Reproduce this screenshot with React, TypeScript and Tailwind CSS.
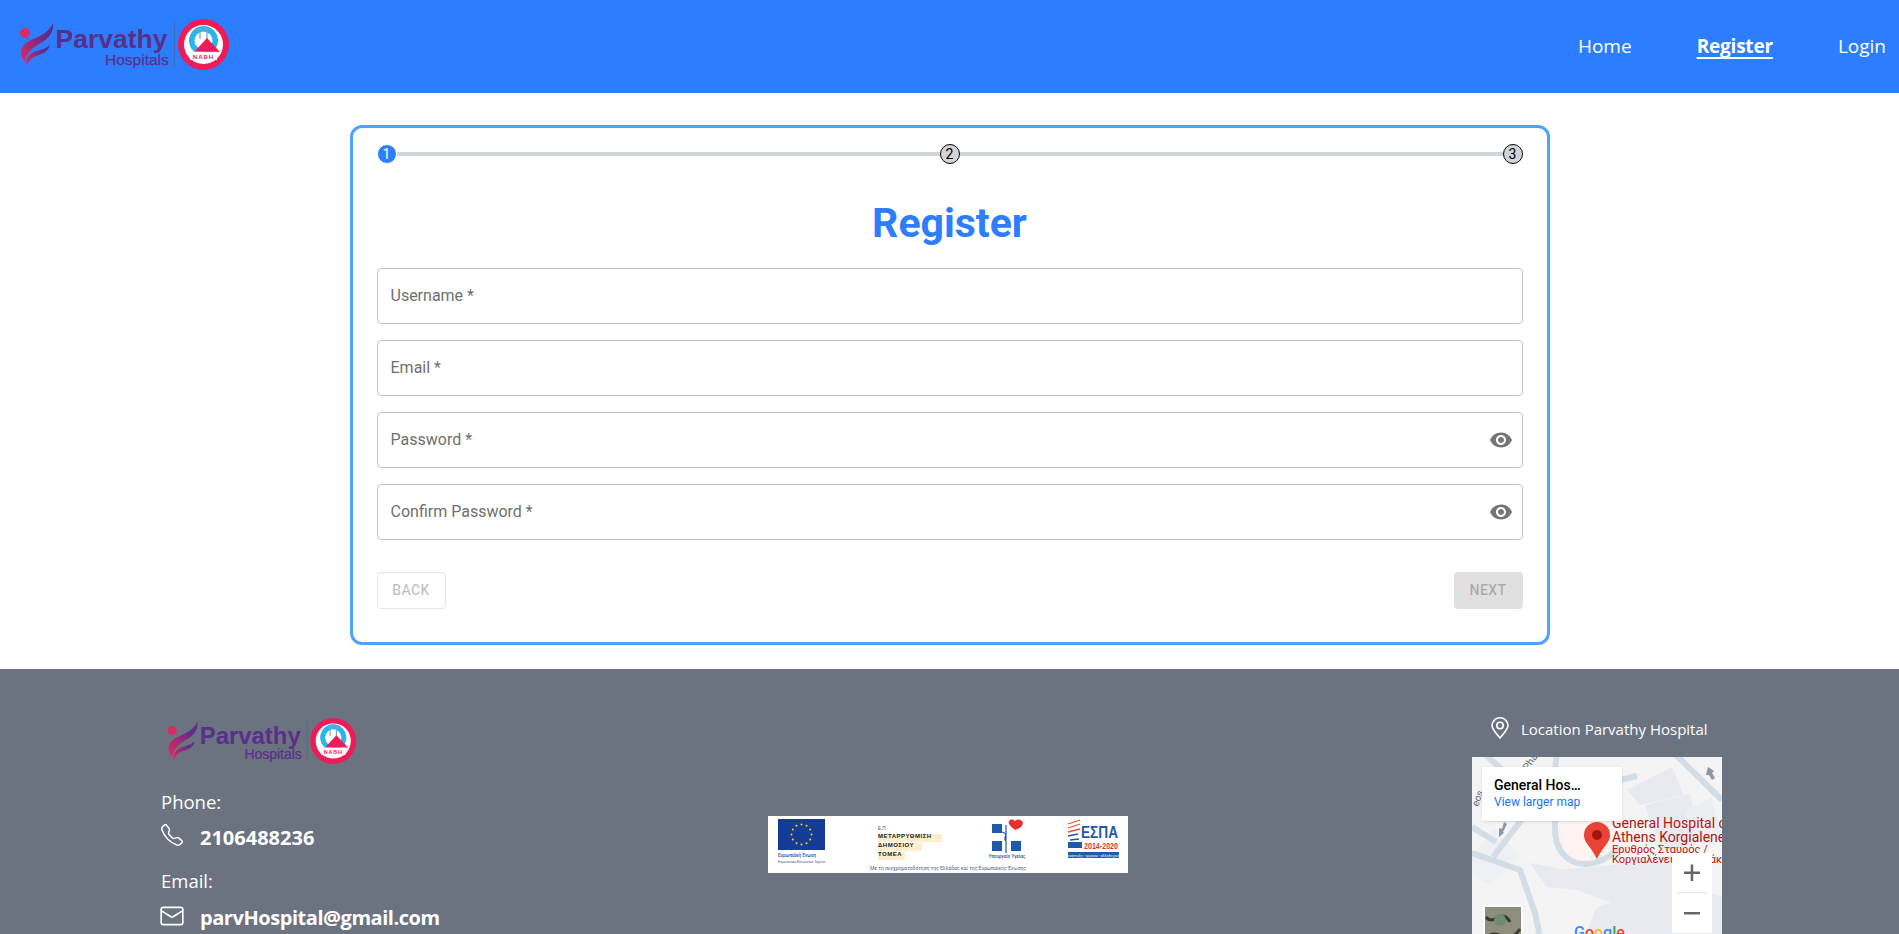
import { useState } from "react";
import { BsTelephone } from "react-icons/bs";
import { Mail } from "lucide-react";

// Logo used in the navbar and the footer
function Logo({ id, className }: { id: string; className: string }) {
  return (
    <svg viewBox="0 0 209 51" className={className}>
      <defs>
        <linearGradient id={`${id}-grad`} x1="0" y1="1" x2="1" y2="0">
          <stop offset="0" stopColor="#ee2557" />
          <stop offset="0.75" stopColor="#5b2d8c" />
        </linearGradient>
      </defs>
      <circle cx="5" cy="14" r="5" fill="#d92c63" />
      <path d="M33 4C34 14 28 20 19 25C11 30 6 35 5 43C0 37-1 31 5 25C14 18 27 17 33 4Z" fill={`url(#${id}-grad)`} />
      <path d="M30 26C28 33 22 35 16 37C11 39 8 42 7 47C5 41 8 36 14 33C20 31 25 30 30 26Z" fill={`url(#${id}-grad)`} />
      <text x="35.500" y="29" fontFamily="Liberation Sans, sans-serif" fontWeight="700" fontSize="26.500" fill="#5a2f8a">Parvathy</text>
      <text x="85" y="46" fontFamily="Liberation Sans, sans-serif" fontSize="15.500" fill="#5a2f8a" stroke="#5a2f8a" strokeWidth="0.25">Hospitals</text>
      <line x1="154.500" y1="3" x2="154.500" y2="48" stroke="#4f5f95" strokeWidth="0.6" />
      <circle cx="183.500" cy="25.500" r="25.500" fill="#ee1b58" />
      <circle cx="183.500" cy="25.500" r="19.500" fill="#fff" />
      <circle cx="183.500" cy="21.500" r="14.500" fill="#29b6ea" />
      <circle cx="183.500" cy="21.500" r="9" fill="#fff" />
      <path d="M180 9v11M187 9v11M178 10h11" stroke="#6fa6c8" strokeWidth="1.200" fill="none" />
      <path d="M175 32L187 19L200 33Z" fill="#ee1b58" />
      <rect x="170" y="33" width="27" height="8" fill="#fff" />
      <text x="183.500" y="40" textAnchor="middle" fontFamily="Liberation Sans, sans-serif" fontWeight="700" fontSize="6" letterSpacing="1" fill="#ee1b58">NABH</text>
    </svg>
  );
}

function Field({ label, secret }: { label: string; secret?: boolean }) {
  const [value, setValue] = useState("");
  return (
    <div className="relative h-14 rounded border border-[#c4c4c4] flex items-center pl-[13px] pr-[9px]">
      <input
        value={value}
        onChange={(e) => setValue(e.target.value)}
        placeholder={label}
        className="flex-1 h-full pb-[2px] outline-none bg-transparent text-base text-[#6f6f6f] placeholder:text-[#6f6f6f]"
        type={secret ? "password" : "text"}
      />
      {secret && (
        <svg viewBox="0 0 24 24" className="w-6 h-6 fill-[#757575]">
          <path d="M12 4.5C7 4.5 2.73 7.61 1 12c1.73 4.39 6 7.5 11 7.5s9.27-3.11 11-7.5c-1.73-4.39-6-7.5-11-7.5zM12 17c-2.76 0-5-2.24-5-5s2.24-5 5-5 5 2.24 5 5-2.24 5-5 5zm0-8c-1.66 0-3 1.34-3 3s1.34 3 3 3 3-1.34 3-3-1.34-3-3-3z" />
        </svg>
      )}
    </div>
  );
}

function StepDot({ n, active }: { n: number; active?: boolean }) {
  return (
    <div
      className={
        active
          ? "w-5 h-5 shrink-0 rounded-full bg-[#2d7dff] border border-white text-white text-sm flex items-center justify-center"
          : "w-5 h-5 shrink-0 rounded-full bg-[#d1d5db] border border-black text-black text-sm flex items-center justify-center"
      }
    >
      {n}
    </div>
  );
}

// Static drawing of the embedded map
function MapDrawing() {
  return (
    <svg viewBox="0 0 250 250" className="w-full h-full block">
      <rect width="250" height="250" fill="#f4f4f5" />
      <path d="M0 100L22 72L48 98L18 128L0 118Z" fill="#eef0f3" />
      <path d="M58 106L90 112L121 110L200 100V130L150 150L105 133L75 130Z" fill="#e8eaef" />
      <path d="M125 150L205 125L250 140V250H150L110 185Z" fill="#e8eaef" />
      <path d="M85 64H150L180 96L121 108L95 100Z" fill="#fdf3f1" />
      <path d="M155 33L200 10L212 38L168 48ZM173 48L218 37L228 85L190 95Z" fill="#e8eaef" />
      <path d="M212 55L240 40L250 85L232 90Z" fill="#eceef2" />
      <g fill="none" stroke="#d3dde6" strokeWidth="6">
        <path d="M0 96L48 113L63 156L70 190L105 250" />
        <path d="M0 70L24 85" />
        <path d="M83 40V70C82 92 95 108 115 107C128 106 138 100 148 90" />
        <path d="M21 100L51 61L84 40" />
        <path d="M85 -5L80 40" />
        <path d="M10 -5L45 25L60 50" />
        <path d="M201 -5L250 43" />
        <path d="M148 23L165 19" />
      </g>
      <path d="M236 10l-2 8 3 0 3 5 3-2-3-5 2-2z" fill="#8a97a6" />
      <path d="M32 65l-2 7-3-1 0 9 5-4-1-1 4-8z" fill="#8a97a6" />
      <text x="56" y="14" transform="rotate(-55 56 14)" fontFamily="Roboto, sans-serif" fontSize="10" fill="#5f6b76">Pha</text>
      <text x="6" y="50" transform="rotate(-70 6 50)" fontFamily="Roboto, sans-serif" fontSize="10" fill="#5f6b76">eos</text>
      <path d="M125 102C118 88 112 86 112 78A13 13 0 0 1 138 78C138 86 132 88 125 102Z" fill="#ea4335" />
      <circle cx="125" cy="78" r="5" fill="#a5140f" />
      <g fontFamily="Roboto, sans-serif" fill="#b3140f">
        <text x="140" y="71" fontSize="14">General Hospital of</text>
        <text x="140" y="85" fontSize="14">Athens Korgialene</text>
        <text x="140" y="96" fontSize="11">Ερυθρός Σταυρός /</text>
        <text x="140" y="106" fontSize="11">Κοργιαλένειο Μπενάκειο</text>
      </g>
      <text x="102" y="181" fontFamily="Roboto, sans-serif" fontSize="16" fontWeight="500">
        <tspan fill="#4285f4">G</tspan>
        <tspan fill="#ea4335">o</tspan>
        <tspan fill="#fbbc05">o</tspan>
        <tspan fill="#4285f4">g</tspan>
        <tspan fill="#34a853">l</tspan>
        <tspan fill="#ea4335">e</tspan>
      </text>
      <rect x="11" y="148" width="40" height="60" rx="2" fill="#fff" />
      <rect x="13" y="150" width="36" height="56" fill="#8d8f7c" />
      <path d="M14 160C22 170 30 150 38 165M16 180C24 170 36 190 48 172" stroke="#3a3a30" strokeWidth="3" fill="none" />
      <circle cx="28" cy="163" r="6" fill="#6f8a72" />
      <rect x="200" y="96" width="40" height="80" fill="#fff" />
      <path d="M212 114.500h16v2.500h-16zM218.700 107.500h2.500v16.500h-2.500zM212 155h16v2.500h-16z" fill="#666" />
      <rect x="205" y="135" width="30" height="1" fill="#e6e6e6" />
    </svg>
  );
}

// Partner banner shown in the middle of the footer
function PartnerBanner() {
  return (
    <svg viewBox="0 0 360 57" className="w-[360px] h-[57px] block">
      <rect width="360" height="57" fill="#fff" />
      <rect x="10" y="3" width="47" height="31" fill="#143c96" />
      {[0, 30, 60, 90, 120, 150, 180, 210, 240, 270, 300, 330].map((a) => (
        <circle
          key={a}
          cx={33.5 + 10 * Math.cos((a * Math.PI) / 180)}
          cy={18.5 + 10 * Math.sin((a * Math.PI) / 180)}
          r="1"
          fill="#f7d417"
        />
      ))}
      <text x="10" y="41" fontFamily="Roboto, sans-serif" fontSize="4.500" fontWeight="500" fill="#1f4f9c">Ευρωπαϊκή Ένωση</text>
      <text x="10" y="47" fontFamily="Roboto, sans-serif" fontSize="3.500" fill="#3a5c97">Ευρωπαϊκό Κοινωνικό Ταμείο</text>

      <text x="110" y="14" fontFamily="Liberation Sans, sans-serif" fontSize="4.500" fill="#555">Ε.Π.</text>
      <rect x="110" y="18" width="64" height="8" fill="#fdeecb" />
      <rect x="110" y="27" width="44" height="8" fill="#fdeecb" />
      <rect x="110" y="36" width="27" height="8" fill="#fdeecb" />
      <g fontFamily="Liberation Sans, sans-serif" fontWeight="700" fontSize="6" letterSpacing="0.5" fill="#222">
        <text x="110" y="22">ΜΕΤΑΡΡΥΘΜΙΣΗ</text>
        <text x="110" y="31">ΔΗΜΟΣΙΟΥ</text>
        <text x="110" y="40">ΤΟΜΕΑ</text>
      </g>

      <rect x="224" y="8" width="10" height="9" fill="#1d5aa8" />
      <rect x="224" y="25" width="10" height="10" fill="#1d5aa8" />
      <rect x="243" y="25" width="10" height="10" fill="#1d5aa8" />
      <path d="M238 9V37M234 16C242 18 234 22 238 25" stroke="#1d5aa8" strokeWidth="1.200" fill="none" />
      <path d="M247 14C241 10 239 6 242 4C244 3 246 4 247 5C248 4 250 3 252 4C256 5 255 8 254 10C252 12 250 13 247 14Z" fill="#e8312f" />
      <text x="239" y="42" textAnchor="middle" fontFamily="Roboto, sans-serif" fontSize="4.500" fontWeight="500" fill="#1f4f9c">Υπουργείο Υγείας</text>

      <path d="M300 8l12-4M300 12l12-4M300 16l12-3" stroke="#e8552f" strokeWidth="1.300" fill="none" />
      <path d="M300 20l10-2M302 24l9-1" stroke="#1d5aa8" strokeWidth="1.300" fill="none" />
      <text x="313" y="22" fontFamily="Liberation Sans, sans-serif" fontSize="17" fontWeight="700" fill="#1d5aa8" textLength="37" lengthAdjust="spacingAndGlyphs">ΕΣΠΑ</text>
      <rect x="300" y="26" width="14" height="6" fill="#1d5aa8" />
      <text x="316" y="33" fontFamily="Liberation Sans, sans-serif" fontSize="9" fontWeight="700" fill="#d8392f" textLength="34" lengthAdjust="spacingAndGlyphs">2014-2020</text>
      <rect x="300" y="36" width="51" height="6" fill="#1d5aa8" />
      <text x="325.500" y="40.500" textAnchor="middle" fontFamily="Roboto, sans-serif" fontSize="3.500" fill="#fff">ανάπτυξη - εργασία - αλληλεγγύη</text>

      <text x="180" y="54" textAnchor="middle" fontFamily="Roboto, sans-serif" fontSize="5" fill="#4a648f">Με τη συγχρηματοδότηση της Ελλάδας και της Ευρωπαϊκής Ένωσης</text>
    </svg>
  );
}

export default function App() {
  const navFont = "font-['Open_Sans',sans-serif]";
  return (
    <div className="h-[934px] overflow-hidden bg-white font-['Roboto',sans-serif]">
      {/* Navbar */}
      <header className="h-[93px] bg-[#2d7dff] flex items-center justify-between pl-5 pr-[13px]">
        <Logo id="nav" className="w-[209px] h-[51px] mb-1" />
        <nav className={`flex items-center gap-[65px] text-white text-[19px] ${navFont}`}>
          <a>Home</a>
          <a className="font-bold tracking-[-0.2px] underline underline-offset-4 decoration-2">Register</a>
          <a>Login</a>
        </nav>
      </header>

      {/* Register card */}
      <main className="pt-8 pb-6 flex justify-center">
        <div className="w-[1200px] border-[3px] border-[#4da3ff] rounded-xl px-6 pt-4 pb-[33px]">
          <div className="flex items-center">
            <StepDot n={1} active />
            <div className="flex-1 h-1 bg-[#d1d5db]" />
            <StepDot n={2} />
            <div className="flex-1 h-1 bg-[#d1d5db]" />
            <StepDot n={3} />
          </div>
          <h1 className="mt-[29px] mb-[15px] text-center text-[41px] leading-[60px] font-bold text-[#2d7dff]">Register</h1>
          <div className="flex flex-col gap-4">
            <Field label="Username *" />
            <Field label="Email *" />
            <Field label="Password *" secret />
            <Field label="Confirm Password *" secret />
          </div>
          <div className="flex justify-between mt-8">
            <button disabled className="w-[69px] h-[37px] pb-[2px] rounded border border-black/10 text-sm font-medium tracking-[0.4px] text-black/25">BACK</button>
            <button disabled className="w-[69px] h-[37px] pb-[2px] rounded bg-[#e0e0e0] text-sm font-medium tracking-[0.4px] text-black/25">NEXT</button>
          </div>
        </div>
      </main>

      {/* Footer */}
      <footer className={`bg-[#6b7280] text-white pl-[161px] pr-[164px] pt-12 pb-8 grid grid-cols-[1fr_360px_1fr] ${navFont}`}>
        <div>
          <Logo id="foot" className="w-[190px] h-[46px] ml-[6px] mt-[1px]" />
          <p className="mt-[24px] text-[18.5px] leading-7">Phone:</p>
          <div className="mt-[8px] flex items-center gap-[17px] text-xl font-bold">
            <BsTelephone className="w-[22px] h-[22px] mb-[6px]" />
            <span>2106488236</span>
          </div>
          <p className="mt-[15px] text-[18.5px] leading-7">Email:</p>
          <div className="mt-[8px] flex items-center gap-[13px] text-xl font-bold">
            <Mail className="w-[26px] h-[26px] -ml-[2px] mb-[4px]" strokeWidth={1.5} />
            <span className="ml-[2px] tracking-[-0.45px]">parvHospital@gmail.com</span>
          </div>
        </div>
        <div className="pt-[99px]">
          <PartnerBanner />
        </div>
        <div className="justify-self-end mr-[13px] w-[250px]">
          <div className="h-10 flex items-start gap-3 pl-[19px]">
            <svg viewBox="0 0 18 22" className="w-[18px] h-[22px] fill-none stroke-white stroke-[1.6]">
              <path d="M9 21C4 15 1 12 1 8.500A8 7.700 0 0 1 17 8.500C17 12 14 15 9 21Z" />
              <circle cx="9" cy="8.500" r="3.200" />
            </svg>
            <span className="text-[15px] leading-6">Location Parvathy Hospital</span>
          </div>
          <div className="relative w-[250px] h-[250px] font-['Roboto',sans-serif]">
            <MapDrawing />
            <div className="absolute left-[10px] top-[10px] w-[140px] h-[54px] bg-white shadow px-3 pt-[9px]">
              <p className="text-sm leading-[18px] font-medium text-black">General Hos…</p>
              <p className="text-xs leading-4 text-[#1a73e8]">View larger map</p>
            </div>
          </div>
        </div>
      </footer>
    </div>
  );
}
